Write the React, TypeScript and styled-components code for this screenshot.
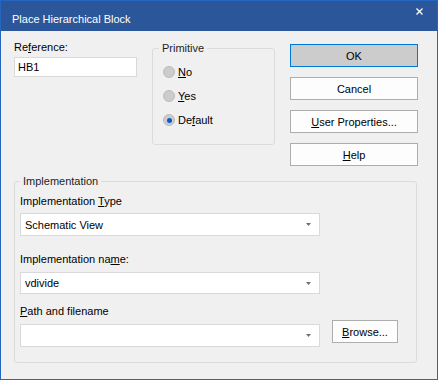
import React from 'react';
import styled, { createGlobalStyle, css } from 'styled-components';

const GlobalStyle = createGlobalStyle`
  body {
    margin: 0;
    background: #f0f0f0;
    font-family: "Liberation Sans", Arial, sans-serif;
  }
`;

const Window = styled.div`
  width: 438px;
  height: 380px;
  box-sizing: border-box;
  border: 1px solid #2466c0;
  background: #f0f0f0;
  display: flex;
  flex-direction: column;
  font-size: 11px;
  color: #000;
`;

const TitleBar = styled.div`
  height: 30px;
  flex: none;
  background: #2b579a;
  color: #fff;
  display: flex;
  justify-content: space-between;
  align-items: flex-start;
`;

const Title = styled.div`
  padding: 12px 0 0 11px;
  line-height: 13px;
  font-size: 11px;
`;

const Close = styled.div`
  margin: 7px 14px 0 0;
  width: 7px;
  height: 7px;
  display: flex;
`;

const Body = styled.div`
  display: flex;
  flex-direction: column;
  padding: 8px 0 0 13px;
`;

const TopRow = styled.div`
  display: flex;
  align-items: flex-start;
`;

const RefColumn = styled.div`
  width: 123px;
  display: flex;
  flex-direction: column;
`;

const Label = styled.div<{ $top?: number }>`
  line-height: 16px;
  height: 16px;
  margin-top: ${(p) => p.$top ?? 0}px;
  white-space: nowrap;
`;

const Key = styled.span`
  text-decoration: underline;
`;

const fieldBox = css`
  box-sizing: border-box;
  background: #fff;
  border: 1px solid #d9d9d9;
`;

const TextInput = styled.div`
  ${fieldBox}
  margin-top: 2px;
  height: 20px;
  line-height: 18px;
  padding-left: 3px;
`;

const GroupBox = styled.fieldset<{ $w: number; $h: number; $pad: string }>`
  margin: 0;
  min-width: 0;
  box-sizing: border-box;
  width: ${(p) => p.$w}px;
  height: ${(p) => p.$h}px;
  border: 1px solid #dcdcdc;
  border-radius: 3px;
  padding: ${(p) => p.$pad};
`;

const Legend = styled.legend<{ $shift?: number }>`
  padding: 0 3px;
  margin-left: ${(p) => p.$shift ?? 0}px;
  line-height: 15px;
  font-size: 11px;
  color: #1e1e1e;
`;

const PrimitiveBox = styled(GroupBox)`
  margin: 2px 0 0 15px;
`;

const ImplBox = styled(GroupBox)`
  margin-top: 8px;
`;

const RadioList = styled.div`
  display: flex;
  flex-direction: column;
  gap: 8px;
`;

const RadioRow = styled.div`
  display: flex;
  align-items: center;
  gap: 3px;
  height: 16px;
  line-height: 16px;
`;

const RadioDot = styled.span<{ $checked?: boolean }>`
  width: 12px;
  height: 12px;
  box-sizing: border-box;
  border-radius: 50%;
  border: 1px solid #bcbcbc;
  background: #cccccc;
  display: flex;
  align-items: center;
  justify-content: center;
  &::after {
    content: '';
    width: 5px;
    height: 5px;
    border-radius: 50%;
    background: ${(p) => (p.$checked ? '#0a5bd0' : 'transparent')};
  }
`;

const ButtonColumn = styled.div`
  margin: 5px 0 0 15px;
  width: 128px;
  display: flex;
  flex-direction: column;
  gap: 10px;
`;

const Button = styled.button<{ $primary?: boolean; $w?: number }>`
  width: ${(p) => (p.$w ? `${p.$w}px` : '100%')};
  height: 23px;
  box-sizing: border-box;
  padding: 0;
  font: inherit;
  font-size: 11px;
  color: #000;
  background: ${(p) => (p.$primary ? '#cccccc' : '#fdfdfd')};
  border: 1px solid ${(p) => (p.$primary ? '#0078d7' : '#adadad')};
  flex: none;
`;

const ComboBox = styled.div<{ $top?: number; $h?: number }>`
  ${fieldBox}
  width: 300px;
  height: ${(p) => p.$h ?? 23}px;
  margin-top: ${(p) => p.$top ?? 0}px;
  display: flex;
  align-items: center;
  justify-content: space-between;
  padding: 0 8px 0 4px;
  flex: none;
`;

const ComboRow = styled.div`
  margin-top: 1px;
  display: flex;
  align-items: flex-start;
  gap: 12px;
`;

const Arrow = () => (
  <svg width="5" height="3" viewBox="0 0 5 3">
    <path d="M0 0 H5 L2.5 3 Z" fill="#707070" />
  </svg>
);

const Combo = ({ value, top, h }: { value: string; top?: number; h?: number }) => (
  <ComboBox $top={top} $h={h}>
    <span>{value}</span>
    <Arrow />
  </ComboBox>
);

const Radio = ({ children, checked }: { children: React.ReactNode; checked?: boolean }) => (
  <RadioRow>
    <RadioDot $checked={checked} />
    <span>{children}</span>
  </RadioRow>
);

export default function App() {
  return (
    <>
      <GlobalStyle />
      <Window>
        <TitleBar>
          <Title>Place Hierarchical Block</Title>
          <Close>
            <svg width="7" height="7" viewBox="0 0 7 7">
              <path d="M0.5 0.5 L6.5 6.5 M6.5 0.5 L0.5 6.5" stroke="#fff" strokeWidth="1.3" />
            </svg>
          </Close>
        </TitleBar>
        <Body>
          <TopRow>
            <RefColumn>
              <Label>
                Re<Key>f</Key>erence:
              </Label>
              <TextInput>HB1</TextInput>
            </RefColumn>
            <PrimitiveBox $w={123} $h={104} $pad="8px 0 0 10px">
              <Legend $shift={-4}>Primitive</Legend>
              <RadioList>
                <Radio>
                  <Key>N</Key>o
                </Radio>
                <Radio>
                  <Key>Y</Key>es
                </Radio>
                <Radio checked>
                  De<Key>f</Key>ault
                </Radio>
              </RadioList>
            </PrimitiveBox>
            <ButtonColumn>
              <Button $primary>OK</Button>
              <Button>Cancel</Button>
              <Button>
                <Key>U</Key>ser Properties...
              </Button>
              <Button>
                <Key>H</Key>elp
              </Button>
            </ButtonColumn>
          </TopRow>
          <ImplBox $w={403} $h={189} $pad="4px 5px 0 5px">
            <Legend>Implementation</Legend>
            <Label>
              Implementation <Key>T</Key>ype
            </Label>
            <Combo value="Schematic View" top={4} />
            <Label $top={15}>
              Implementation na<Key>m</Key>e:
            </Label>
            <Combo value="vdivide" top={5} h={22} />
            <Label $top={9}>
              <Key>P</Key>ath and filename
            </Label>
            <ComboRow>
              <Combo value="" top={4} />
              <Button $w={66}>
                <Key>B</Key>rowse...
              </Button>
            </ComboRow>
          </ImplBox>
        </Body>
      </Window>
    </>
  );
}
